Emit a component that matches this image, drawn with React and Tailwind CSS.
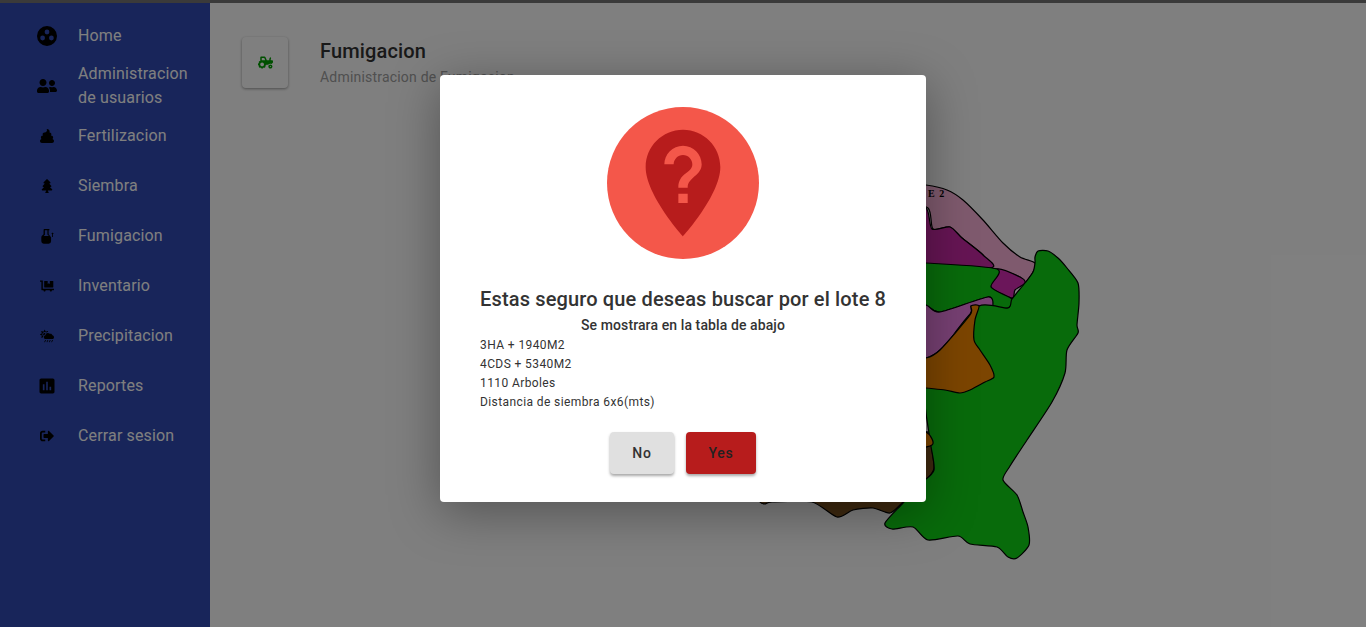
import { FaPoop, FaTree, FaDollyFlatbed, FaCloudSunRain, FaSignOutAlt, FaTractor, FaUserFriends } from "react-icons/fa";
import { MdAssessment, MdNotListedLocation } from "react-icons/md";

function HomeIcon({ size }) {
  return (
    <svg width={size} height={size} viewBox="0 0 20 20">
      <path
        fillRule="evenodd"
        d="M10 0a10 10 0 1 0 0 20a10 10 0 0 0 0-20zM10 3.6a2.4 2.4 0 1 1 0 4.8a2.4 2.4 0 0 1 0-4.8zM5.6 9.6a2.4 2.4 0 1 1 0 4.8a2.4 2.4 0 0 1 0-4.8zM14.4 9.6a2.4 2.4 0 1 1 0 4.8a2.4 2.4 0 0 1 0-4.8z"
        fill="#000"
      />
    </svg>
  );
}

// flask with a filled bottom and a small spout on the right
function FlaskIcon({ size }) {
  return (
    <svg width={size} height={size} viewBox="0 0 14 16">
      <path
        fillRule="evenodd"
        d="M3 0h6v1.2H8.2v4.4l2.6 3.2V13a2.6 2.6 0 0 1-2.6 2.6H3A2.6 2.6 0 0 1 .4 13V9.2a3 3 0 0 1 .7-1.9l1.7-1.7V1.2H3zM4.2 1.2v4.9L2.9 7.4h5.6L6.9 5.8V1.2z"
        fill="#000"
      />
      <path d="M11 5.4l1.4-1.8 1.4 1.8h-1v3.2h-.9V5.4z" fill="#000" />
    </svg>
  );
}

const MENU = [
  { icon: HomeIcon, size: 20, label: "Home" },
  { icon: FaUserFriends, size: 20, label: "Administracion de usuarios" },
  { icon: FaPoop, size: 14, label: "Fertilizacion" },
  { icon: FaTree, size: 14, label: "Siembra" },
  { icon: FlaskIcon, size: 15, label: "Fumigacion" },
  { icon: FaDollyFlatbed, size: 14, label: "Inventario" },
  { icon: FaCloudSunRain, size: 14, label: "Precipitacion" },
  { icon: MdAssessment, size: 24, label: "Reportes" },
  { icon: FaSignOutAlt, size: 14, label: "Cerrar sesion" },
];

const DETAILS = ["3HA + 1940M2", "4CDS + 5340M2", "1110 Arboles", "Distancia de siembra 6x6(mts)"];

// closed catmull-rom through the traced points, so the lot borders stay organic
function smooth(pts) {
  const n = pts.length;
  let d = `M${pts[0][0]} ${pts[0][1]}`;
  for (let i = 0; i < n; i++) {
    const p0 = pts[(i - 1 + n) % n];
    const p1 = pts[i];
    const p2 = pts[(i + 1) % n];
    const p3 = pts[(i + 2) % n];
    const c1x = p1[0] + (p2[0] - p0[0]) / 8;
    const c1y = p1[1] + (p2[1] - p0[1]) / 8;
    const c2x = p2[0] - (p3[0] - p1[0]) / 8;
    const c2y = p2[1] - (p3[1] - p1[1]) / 8;
    d += `C${c1x} ${c1y} ${c2x} ${c2y} ${p2[0]} ${p2[1]}`;
  }
  return d + "Z";
}

const LOTS = [
  {
    fill: "#7e5420",
    pts: [[755, 490], [760, 502], [765, 504], [772, 502], [812, 502], [837, 517], [853, 510], [873, 508], [890, 513], [903, 502], [928, 478], [934, 468], [932, 450], [930, 432], [800, 440]],
  },
  {
    fill: "#ffb4dc",
    pts: [[900, 183], [926, 185], [947, 190], [963, 200], [983, 220], [1003, 243], [1020, 257], [1035, 263], [1033, 272], [1025, 283], [1020, 277], [997, 269], [988, 268], [983, 255], [962, 238], [950, 227], [933, 229], [928, 208], [900, 200]],
  },
  {
    fill: "#cc2aa8",
    pts: [[900, 205], [926, 208], [932, 229], [950, 227], [962, 238], [983, 255], [990, 268], [900, 263]],
  },
  { fill: "#d62cb4", pts: [[997, 269], [1020, 277], [1025, 283], [1015, 290], [1012, 298], [991, 287]] },
  {
    fill: "#10d616",
    pts: [[900, 262], [926, 263], [997, 269], [991, 287], [1012, 299], [1008, 308], [992, 307], [988, 297], [940, 312], [926, 305], [900, 300]],
  },
  {
    fill: "#ee80e6",
    pts: [[900, 300], [926, 305], [940, 312], [988, 297], [992, 307], [979, 306], [971, 306], [970, 315], [940, 350], [926, 358], [900, 360]],
  },
  {
    fill: "#10d616",
    pts: [[1035, 263], [1035, 257], [1038, 251], [1048, 251], [1058, 258], [1067, 268], [1078, 283], [1079, 303], [1077, 325], [1078, 333], [1067, 350], [1065, 373], [1052, 402], [1027, 440], [1010, 466], [1003, 480], [1017, 495], [1023, 512], [1028, 527], [1029, 545], [1017, 558], [1008, 557], [997, 547], [970, 544], [958, 536], [928, 540], [913, 527], [892, 529], [885, 523], [903, 503], [920, 484], [934, 470], [930, 440], [925, 388], [950, 340], [979, 306], [1008, 308], [1012, 299], [1025, 283], [1033, 272]],
  },
  {
    fill: "#f88a02",
    pts: [[971, 306], [979, 306], [975, 320], [974, 340], [980, 350], [990, 365], [994, 377], [985, 382], [970, 390], [960, 393], [945, 390], [926, 388], [900, 385], [900, 360], [926, 358], [940, 350], [970, 315]],
  },
  { fill: "#f88a02", pts: [[900, 430], [926, 432], [932, 445], [900, 450]] },
];

function LotMap() {
  return (
    <svg width="400" height="400" viewBox="700 170 400 400" className="mt-[82px] ml-[458px] shrink-0">
      {LOTS.map((lot, i) => (
        <path key={i} d={smooth(lot.pts)} fill={lot.fill} stroke="#000" strokeWidth="1.2" strokeLinejoin="round" />
      ))}
      <text x="928" y="197" fontFamily="'Liberation Serif', serif" fontWeight="700" fontSize="10" letterSpacing="1" fill="#000">
        E 2
      </text>
    </svg>
  );
}

export default function App() {
  return (
    <div className="relative h-screen w-full overflow-hidden bg-white font-['Roboto',sans-serif]">
      <div className="h-[3px] bg-[#747474]" />
      <div className="flex h-[624px]">
        {/* Sidebar */}
        <aside className="w-[210px] shrink-0 bg-[#304ab4] pt-[8px] pl-[37px] text-white">
          {MENU.map((item) => (
            <div key={item.label} className="flex h-[50px] items-center gap-[21px]">
              <span className="flex w-[20px] shrink-0 justify-center text-black">
                <item.icon size={item.size} />
              </span>
              <span className="w-[115px] text-base leading-6 tracking-[0.15px]">{item.label}</span>
            </div>
          ))}
        </aside>

        {/* Main */}
        <main className="flex-1 overflow-hidden pt-[34px] pl-8">
          <div className="flex h-[51px] items-start gap-8">
            <div className="flex h-[51px] w-[46px] items-center justify-center rounded bg-white shadow-[0_1px_3px_rgba(0,0,0,0.4)]">
              <FaTractor size={15} className="text-[#00a000]" />
            </div>
            <div>
              <h1 className="text-xl leading-7 font-medium tracking-[0.15px] text-[#333]">Fumigacion</h1>
              <p className="mt-[2px] text-sm leading-5 tracking-[0.2px] text-[#a0a0a0]">Administracion de Fumigacion</p>
            </div>
          </div>
          <LotMap />
        </main>
      </div>

      {/* Dialog */}
      <div className="absolute inset-0 flex items-start justify-center bg-black/50 pt-[75px]">
        <div className="h-[427px] w-[486px] rounded bg-white px-10 pt-8 shadow-[0_10px_50px_rgba(0,0,0,0.35)]">
          <div className="mx-auto flex h-[152px] w-[152px] items-center justify-center rounded-full bg-[#f4574a]">
            <MdNotListedLocation size={128} className="text-[#b71c1c]" />
          </div>
          <h2 className="mt-6 text-center text-xl leading-8 font-medium tracking-[0.15px] whitespace-nowrap text-[#333]">
            Estas seguro que deseas buscar por el lote 8
          </h2>
          <p className="text-center text-sm leading-5 font-medium tracking-[0.1px] text-[#333]">Se mostrara en la tabla de abajo</p>
          <div className="pt-px text-xs leading-[19px] tracking-[0.4px] text-[#333]">
            {DETAILS.map((d) => (
              <div key={d}>{d}</div>
            ))}
          </div>
          <div className="mt-5 flex justify-center gap-3">
            <button className="h-[42px] w-16 rounded bg-[#e0e0e0] text-sm font-medium tracking-[0.75px] text-[#333] shadow-[0_2px_3px_rgba(0,0,0,0.35)]">
              No
            </button>
            <button className="h-[42px] w-[70px] rounded bg-[#b71c1c] text-sm font-medium tracking-[0.75px] text-[#222] shadow-[0_2px_3px_rgba(0,0,0,0.35)]">
              Yes
            </button>
          </div>
        </div>
      </div>
    </div>
  );
}
